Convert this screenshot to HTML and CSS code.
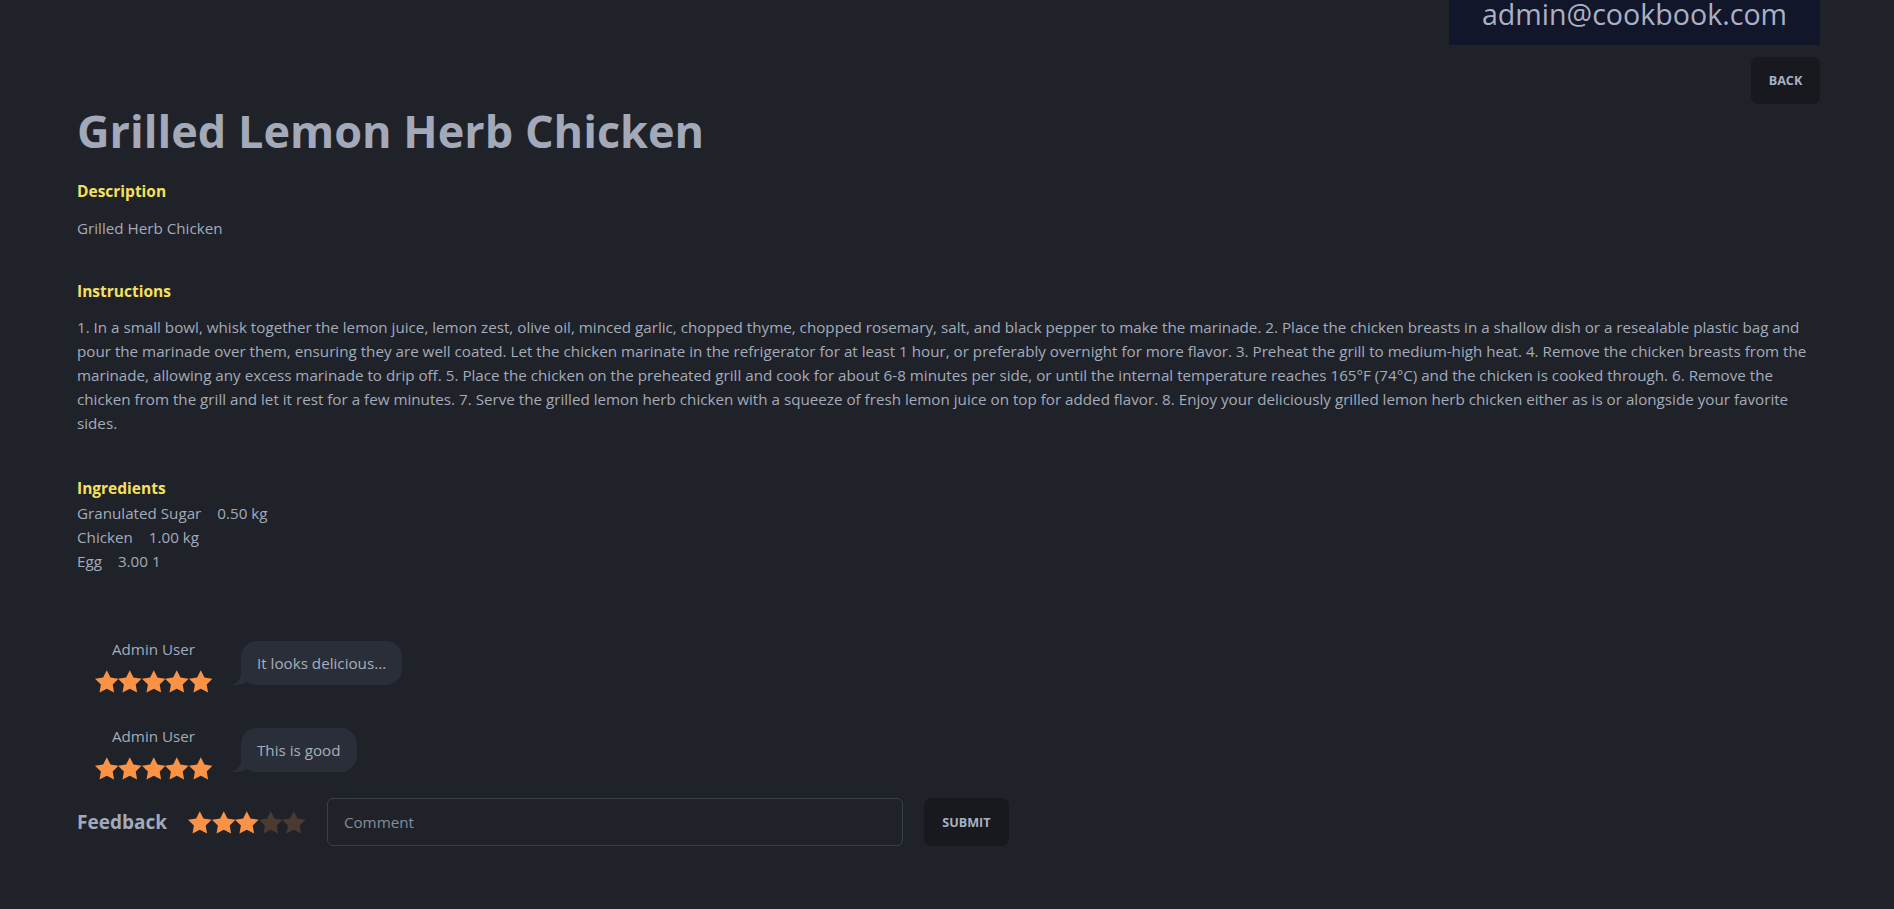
FILE: index.html
```html
<!DOCTYPE html>
<html lang="en">
<head>
<meta charset="utf-8">
<title>Grilled Lemon Herb Chicken</title>
<link rel="stylesheet" href="styles.css">
</head>
<body>
<div class="page">
  <header class="topbar">
    <div class="user-box">admin@cookbook.com</div>
  </header>
  <div class="back-row">
    <button class="btn">BACK</button>
  </div>
  <h1 class="title">Grilled Lemon Herb Chicken</h1>

  <section class="section sec-desc">
    <h2 class="label">Description</h2>
    <p class="text">Grilled Herb Chicken</p>
  </section>

  <section class="section sec-instr">
    <h2 class="label">Instructions</h2>
    <p class="text">1. In a small bowl, whisk together the lemon juice, lemon zest, olive oil, minced garlic, chopped thyme, chopped rosemary, salt, and black pepper to make the marinade. 2. Place the chicken breasts in a shallow dish or a resealable plastic bag and pour the marinade over them, ensuring they are well coated. Let the chicken marinate in the refrigerator for at least 1 hour, or preferably overnight for more flavor. 3. Preheat the grill to medium-high heat. 4. Remove the chicken breasts from the marinade, allowing any excess marinade to drip off. 5. Place the chicken on the preheated grill and cook for about 6-8 minutes per side, or until the internal temperature reaches 165°F (74°C) and the chicken is cooked through. 6. Remove the chicken from the grill and let it rest for a few minutes. 7. Serve the grilled lemon herb chicken with a squeeze of fresh lemon juice on top for added flavor. 8. Enjoy your deliciously grilled lemon herb chicken either as is or alongside your favorite sides.</p>
  </section>

  <section class="section sec-ingr">
    <h2 class="label">Ingredients</h2>
    <ul class="ingredients">
      <li><span>Granulated Sugar</span><span>0.50 kg</span></li>
      <li><span>Chicken</span><span>1.00 kg</span></li>
      <li><span>Egg</span><span>3.00 1</span></li>
    </ul>
  </section>

  <section class="comments">
    <div class="comment">
      <div class="author">
        <div class="author-name">Admin User</div>
        <div class="stars">
          <svg class="star on" viewBox="2 2 20 19.2"><polygon points="12,2 15.09,8.26 22,9.27 17,14.14 18.18,21.02 12,17.77 5.82,21.02 7,14.14 2,9.27 8.91,8.26"/></svg>
          <svg class="star on" viewBox="2 2 20 19.2"><polygon points="12,2 15.09,8.26 22,9.27 17,14.14 18.18,21.02 12,17.77 5.82,21.02 7,14.14 2,9.27 8.91,8.26"/></svg>
          <svg class="star on" viewBox="2 2 20 19.2"><polygon points="12,2 15.09,8.26 22,9.27 17,14.14 18.18,21.02 12,17.77 5.82,21.02 7,14.14 2,9.27 8.91,8.26"/></svg>
          <svg class="star on" viewBox="2 2 20 19.2"><polygon points="12,2 15.09,8.26 22,9.27 17,14.14 18.18,21.02 12,17.77 5.82,21.02 7,14.14 2,9.27 8.91,8.26"/></svg>
          <svg class="star on" viewBox="2 2 20 19.2"><polygon points="12,2 15.09,8.26 22,9.27 17,14.14 18.18,21.02 12,17.77 5.82,21.02 7,14.14 2,9.27 8.91,8.26"/></svg>
        </div>
      </div>
      <div class="bubble">It looks delicious...</div>
    </div>
    <div class="comment">
      <div class="author">
        <div class="author-name">Admin User</div>
        <div class="stars">
          <svg class="star on" viewBox="2 2 20 19.2"><polygon points="12,2 15.09,8.26 22,9.27 17,14.14 18.18,21.02 12,17.77 5.82,21.02 7,14.14 2,9.27 8.91,8.26"/></svg>
          <svg class="star on" viewBox="2 2 20 19.2"><polygon points="12,2 15.09,8.26 22,9.27 17,14.14 18.18,21.02 12,17.77 5.82,21.02 7,14.14 2,9.27 8.91,8.26"/></svg>
          <svg class="star on" viewBox="2 2 20 19.2"><polygon points="12,2 15.09,8.26 22,9.27 17,14.14 18.18,21.02 12,17.77 5.82,21.02 7,14.14 2,9.27 8.91,8.26"/></svg>
          <svg class="star on" viewBox="2 2 20 19.2"><polygon points="12,2 15.09,8.26 22,9.27 17,14.14 18.18,21.02 12,17.77 5.82,21.02 7,14.14 2,9.27 8.91,8.26"/></svg>
          <svg class="star on" viewBox="2 2 20 19.2"><polygon points="12,2 15.09,8.26 22,9.27 17,14.14 18.18,21.02 12,17.77 5.82,21.02 7,14.14 2,9.27 8.91,8.26"/></svg>
        </div>
      </div>
      <div class="bubble">This is good</div>
    </div>
  </section>

  <form class="feedback" onsubmit="return false">
    <span class="feedback-label">Feedback</span>
    <div class="stars stars-lg">
      <svg class="star on" viewBox="2 2 20 19.2"><polygon points="12,2 15.09,8.26 22,9.27 17,14.14 18.18,21.02 12,17.77 5.82,21.02 7,14.14 2,9.27 8.91,8.26"/></svg>
      <svg class="star on" viewBox="2 2 20 19.2"><polygon points="12,2 15.09,8.26 22,9.27 17,14.14 18.18,21.02 12,17.77 5.82,21.02 7,14.14 2,9.27 8.91,8.26"/></svg>
      <svg class="star on" viewBox="2 2 20 19.2"><polygon points="12,2 15.09,8.26 22,9.27 17,14.14 18.18,21.02 12,17.77 5.82,21.02 7,14.14 2,9.27 8.91,8.26"/></svg>
      <svg class="star off" viewBox="2 2 20 19.2"><polygon points="12,2 15.09,8.26 22,9.27 17,14.14 18.18,21.02 12,17.77 5.82,21.02 7,14.14 2,9.27 8.91,8.26"/></svg>
      <svg class="star off" viewBox="2 2 20 19.2"><polygon points="12,2 15.09,8.26 22,9.27 17,14.14 18.18,21.02 12,17.77 5.82,21.02 7,14.14 2,9.27 8.91,8.26"/></svg>
    </div>
    <input class="comment-input" type="text" placeholder="Comment">
    <button class="btn btn-submit" type="submit">SUBMIT</button>
  </form>
</div>
</body>
</html>
```

FILE: styles.css
```css
* { box-sizing: border-box; }

html, body {
  margin: 0;
  padding: 0;
  background: #1f2229;
}

body {
  font-family: "Open Sans", "Noto Sans", sans-serif;
  color: #a4abb9;
  font-size: 15.2px;
  line-height: 24px;
}

.page {
  padding: 0 74px 40px 77px;
}

.topbar {
  display: flex;
  justify-content: flex-end;
}

.user-box {
  width: 371px;
  height: 45px;
  background: #12162a;
  color: #a9b1c2;
  font-size: 28.6px;
  line-height: 27px;
  text-align: center;
  padding-top: 0;
  overflow: hidden;
}

.back-row {
  display: flex;
  justify-content: flex-end;
  margin-top: 12px;
}

.btn {
  font-family: "Open Sans", "Noto Sans", sans-serif;
  font-weight: 700;
  font-size: 12.6px;
  color: #a9b0bf;
  background: #17191f;
  border: none;
  border-radius: 7px;
  height: 47px;
  width: 69px;
  padding: 0;
  cursor: pointer;
}

.title {
  margin: 0;
  font-size: 45px;
  line-height: 54px;
  font-weight: 700;
  color: #a3a9b9;
}

.section { margin: 0; }

.sec-desc { margin-top: 21px; }
.sec-instr { margin-top: 39px; }
.sec-ingr { margin-top: 41px; }

.label {
  margin: 0;
  font-size: 15.5px;
  line-height: 24px;
  font-weight: 700;
  color: #f6e05e;
}

.text {
  margin: 13px 0 0 0;
}

.sec-instr .text { margin-top: 12px; }

.ingredients {
  list-style: none;
  margin: 1px 0 0 0;
  padding: 0;
}

.ingredients li {
  display: flex;
  gap: 16px;
}

.comments {
  margin-top: 64px;
  display: flex;
  flex-direction: column;
  gap: 31px;
  padding-left: 17px;
}

.comment {
  display: flex;
  align-items: flex-start;
  gap: 28px;
}

.author {
  width: 119px;
  display: flex;
  flex-direction: column;
  align-items: center;
}

.author-name {
  line-height: 24px;
}

.stars {
  display: flex;
  gap: 0;
  margin-top: 9px;
}

.star {
  width: 23.6px;
  height: 23px;
  display: block;
}

.star.on { fill: #fb9346; }
.star.off { fill: #4a3b31; }

.bubble {
  position: relative;
  margin-top: 4px;
  background: #2a2e38;
  border-radius: 16px;
  padding: 10px 16px;
  font-size: 15.2px;
  line-height: 24px;
  color: #a6aebd;
}

.bubble::before {
  content: "";
  position: absolute;
  left: -10px;
  bottom: 0;
  width: 22px;
  height: 22px;
  background: #2a2e38;
  border-bottom-right-radius: 16px 14px;
}

.bubble::after {
  content: "";
  position: absolute;
  left: -12px;
  bottom: 0;
  width: 12px;
  height: 22px;
  background: #1f2229;
  border-bottom-right-radius: 12px;
}

.feedback {
  margin-top: 18px;
  display: flex;
  align-items: center;
  gap: 21px;
}

.feedback-label {
  font-weight: 700;
  font-size: 19px;
  color: #a3a9b9;
}

.stars-lg {
  margin-top: 0;
}

.comment-input {
  width: 576px;
  height: 48px;
  background: transparent;
  border: 1px solid #3b3f49;
  border-radius: 6px;
  padding: 0 16px;
  font-family: "Open Sans", "Noto Sans", sans-serif;
  font-size: 15.2px;
  color: #a4abb9;
  outline: none;
}

.comment-input::placeholder { color: #858c99; }

.btn-submit {
  height: 48px;
  width: 85px;
  margin-left: 0;
}
```
